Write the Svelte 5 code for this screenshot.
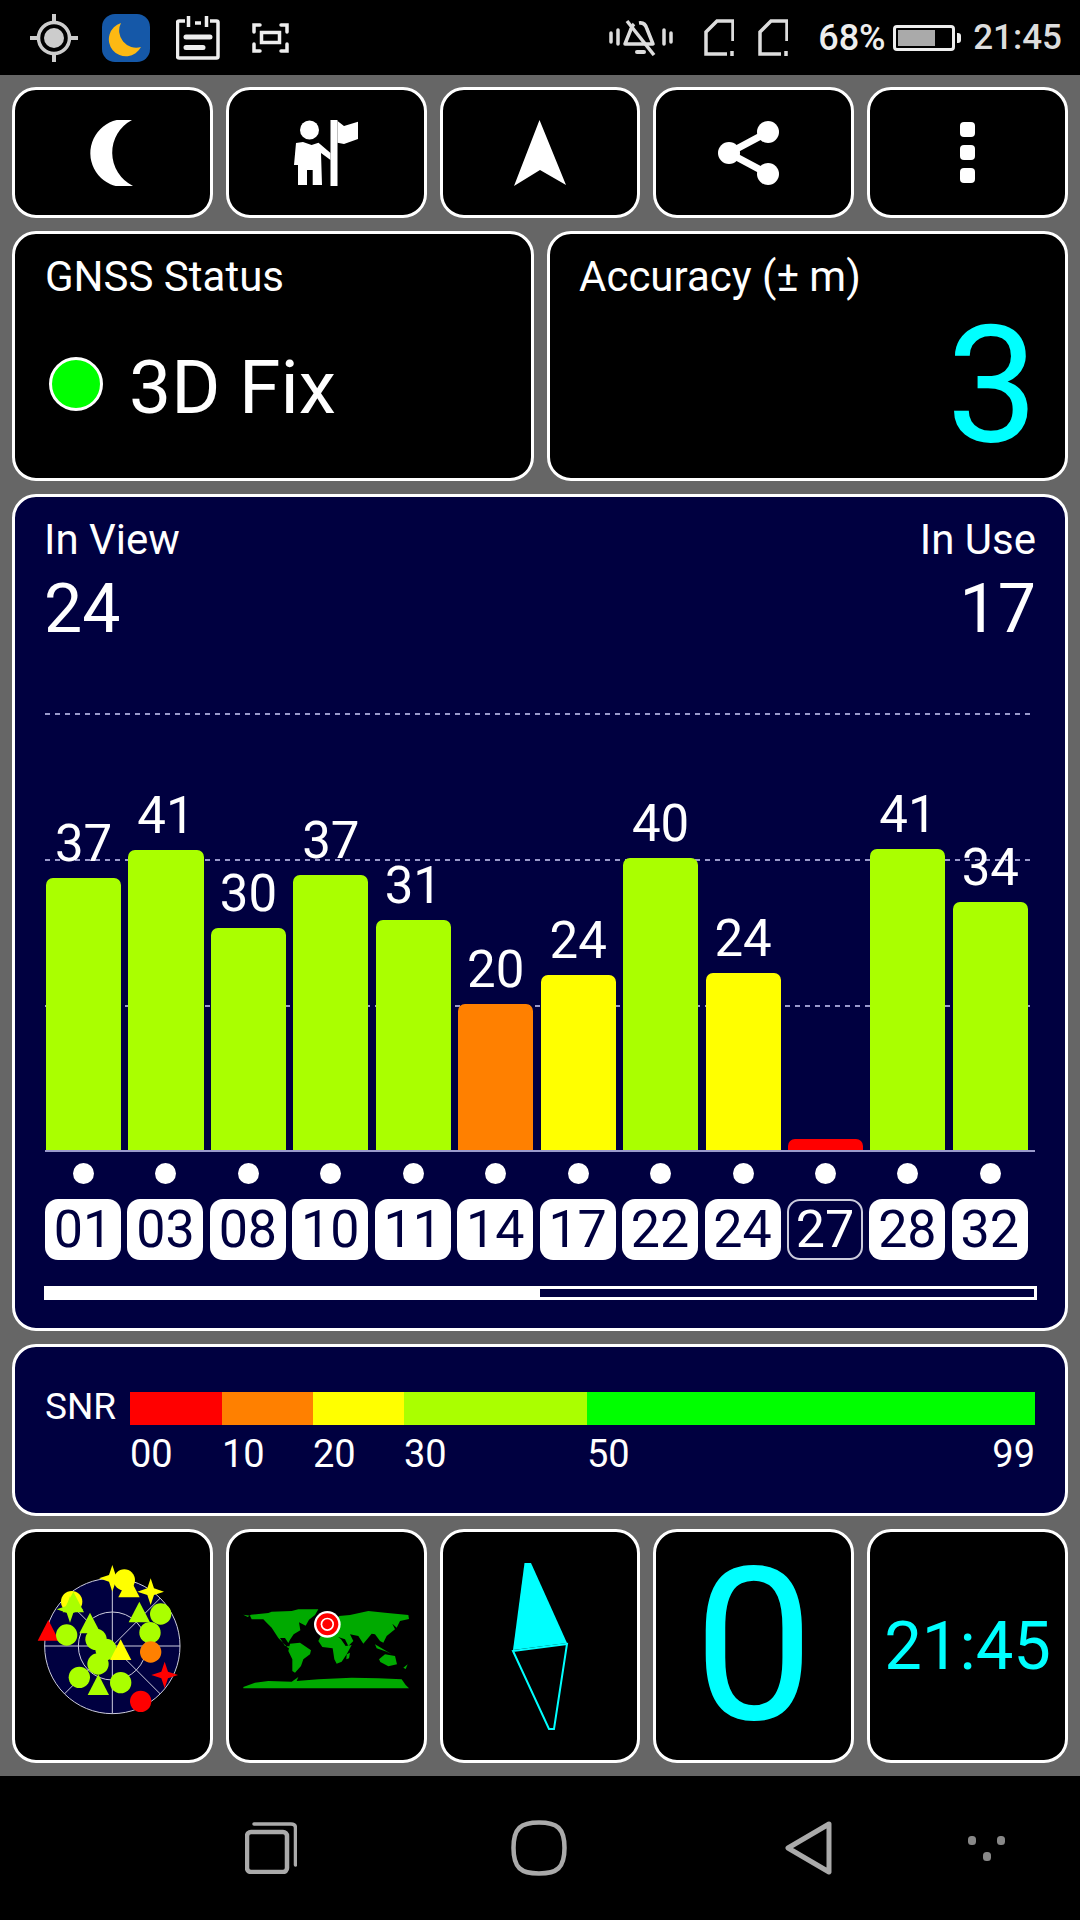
<script lang="ts">
  const LIME = "#aaff00";
  const YELLOW = "#ffff00";
  const ORANGE = "#ff8000";
  const RED = "#ff0000";

  const sats = [
    { id: "01", snr: 37, h: 272, color: LIME },
    { id: "03", snr: 41, h: 300, color: LIME },
    { id: "08", snr: 30, h: 222, color: LIME },
    { id: "10", snr: 37, h: 275, color: LIME },
    { id: "11", snr: 31, h: 230, color: LIME },
    { id: "14", snr: 20, h: 146, color: ORANGE },
    { id: "17", snr: 24, h: 175, color: YELLOW },
    { id: "22", snr: 40, h: 292, color: LIME },
    { id: "24", snr: 24, h: 177, color: YELLOW },
    { id: "27", snr: null, h: 11, color: RED, off: true },
    { id: "28", snr: 41, h: 301, color: LIME },
    { id: "32", snr: 34, h: 248, color: LIME }
  ];

  const scale = [
    { label: "00", w: 92, color: RED },
    { label: "10", w: 91, color: ORANGE },
    { label: "20", w: 91, color: YELLOW },
    { label: "30", w: 183, color: LIME },
    { label: "50", w: 448, color: "#00ff00", end: "99" }
  ];

  // radar marks, in 510 unit space
  const circles = [
    [283, 60, YELLOW], [125, 125, YELLOW], [392, 162, LIME], [360, 218, LIME],
    [362, 276, ORANGE], [110, 225, LIME], [198, 238, LIME], [228, 268, LIME],
    [204, 312, LIME], [148, 352, LIME], [272, 368, LIME], [332, 424, RED]
  ];
  const triangles = [
    [297, 50, YELLOW], [328, 125, LIME], [55, 180, RED], [180, 158, LIME]
  ];
  const stars = [
    [247, 55, YELLOW], [362, 95, YELLOW], [404, 345, RED]
  ];

  function tri(x: number, y: number) {
    return `${x},${y} ${x + 32},${y + 62} ${x - 32},${y + 62}`;
  }
  function star(x: number, y: number) {
    const r = 40;
    const k = 10;
    return `${x},${y - r} ${x + k},${y - k} ${x + r},${y} ${x + k},${y + k} ${x},${y + r} ${x - k},${y + k} ${x - r},${y} ${x - k},${y - k}`;
  }
</script>

<div class="screen">
  <header class="status">
    <div class="status-left">
      <svg class="ic" width="48" height="48" viewBox="0 0 48 48">
        <circle cx="24" cy="24" r="15.500" fill="none" stroke="#ccc" stroke-width="3.500" />
        <circle cx="24" cy="24" r="10" fill="#ccc" />
        <path d="M24 0v8M24 40v8M0 24h8M40 24h8" stroke="#ccc" stroke-width="4" />
      </svg>
      <svg class="ic app" width="48" height="48" viewBox="0 0 48 48">
        <rect width="48" height="48" rx="13" fill="#1558a8" />
        <path d="M19 9A17 17 0 1 0 39 33A17 17 0 0 1 19 9Z" fill="#fdb913" />
      </svg>
      <svg class="ic notes" width="44" height="44" viewBox="0 0 44 44" fill="none" stroke="#eee" stroke-width="3.500">
        <path d="M9 5H3a1.500 1.500 0 0 0-1.500 1.500V40.500A1.500 1.500 0 0 0 3 42H40.500A1.500 1.500 0 0 0 42 40.500V6.500A1.500 1.500 0 0 0 40.500 5H34" />
        <path d="M12.500 0v11M30.500 0v11M19 7h6" />
        <path d="M10 21h24M10 31.500h17" stroke-width="5" stroke-linecap="round" />
      </svg>
      <svg class="ic shot" width="37" height="30" viewBox="0 0 37 30" fill="none" stroke="#eee" stroke-width="3.500">
        <path d="M8 2H2v7M29 2h6v7M2 21v7h6M35 21v7h-6" stroke-linecap="round" />
        <rect x="9.500" y="9.500" width="18" height="10" />
      </svg>
    </div>
    <div class="status-right">
      <svg class="ic" width="64" height="37" viewBox="0 0 64 37" fill="none" stroke="#ddd">
        <path d="M30 4 Q36 3 38 10L44 25H16L22 10Q23 7 25 5" stroke-width="3.500" stroke-linejoin="round" />
        <path d="M18 2L45 36" stroke-width="3.500" />
        <path d="M28 33h7" stroke-width="4" stroke-linecap="round" />
        <path d="M2 14v9M9 11v14M55 11v14M62 14v9" stroke-width="3.500" stroke-linecap="round" />
      </svg>
      <svg class="ic sim1" width="30" height="37" viewBox="0 0 30 37" fill="none" stroke="#ddd" stroke-width="3.500">
        <path d="M29 22V2H13L2 13V35H23" />
        <path d="M28 32v5" />
      </svg>
      <svg class="ic sim2" width="30" height="37" viewBox="0 0 30 37" fill="none" stroke="#ddd" stroke-width="3.500">
        <path d="M29 22V2H13L2 13V35H23" />
        <path d="M28 32v5" />
      </svg>
      <span class="pct">68%</span>
      <div class="battery"><div class="battery-fill"></div></div>
      <div class="battery-tip"></div>
      <span class="clock">21:45</span>
    </div>
  </header>

  <main class="main">
    <div class="row5 top">
      <div class="btn">
        <svg width="44" height="66" viewBox="0 0 44 66"><path d="M42 0A34 34 0 1 0 43 66A37 37 0 0 1 42 0Z" fill="#fff" /></svg>
      </div>
      <div class="btn">
        <svg width="64" height="66" viewBox="0 0 64 66" fill="#fff">
          <circle cx="15.500" cy="10" r="9.500" />
          <rect x="36.500" y="0" width="7" height="66" />
          <path d="M43.500 1L50 6L64 1.700V19L50 24L43.500 22.700Z" />
          <path d="M2 23L9 22L17.600 25L24.500 22.700L36.500 33V40L27 33L28 65H18.700V50H13V65H4V45H0Z" />
        </svg>
      </div>
      <div class="btn">
        <svg width="54" height="66" viewBox="0 0 54 66"><path d="M26.500 0L53 65L27 50L1 66Z" fill="#fff" /></svg>
      </div>
      <div class="btn">
        <svg class="share" width="62" height="64" viewBox="0 0 62 64" fill="#fff">
          <circle cx="50" cy="11" r="11" /><circle cx="11" cy="32" r="11" /><circle cx="50" cy="53" r="11" />
          <path d="M50 11L11 32L50 53" fill="none" stroke="#fff" stroke-width="7" />
        </svg>
      </div>
      <div class="btn">
        <div class="dots"><i></i><i></i><i></i></div>
      </div>
    </div>

    <div class="row2">
      <section class="card">
        <div class="label">GNSS Status</div>
        <div class="fix">
          <span class="fix-dot"></span>
          <span class="fix-text">3D Fix</span>
        </div>
      </section>
      <section class="card accuracy">
        <div class="label">Accuracy (± m)</div>
        <div class="accuracy-value">3</div>
      </section>
    </div>

    <section class="sky">
      <div class="counts">
        <div>
          <div class="label">In View</div>
          <div class="count">24</div>
        </div>
        <div class="right">
          <div class="label">In Use</div>
          <div class="count">17</div>
        </div>
      </div>

      <div class="chart">
        <div class="dash d1"></div>
        <div class="dash d2"></div>
        <div class="dash d3"></div>
        <div class="cols bars">
          {#each sats as s}
            <div class="col">
              {#if s.snr !== null}<div class="snr">{s.snr}</div>{/if}
              <div class="bar" style="height: {s.h}px; background: {s.color}"></div>
            </div>
          {/each}
        </div>
      </div>

      <div class="cols dots-row">
        {#each sats as s}
          <span class="sat-dot"></span>
        {/each}
      </div>

      <div class="cols chips">
        {#each sats as s}
          <div class="chip" class:off={s.off}>{s.id}</div>
        {/each}
      </div>

      <div class="progress"><div class="progress-fill"></div></div>
    </section>

    <section class="snr-panel">
      <div class="snr-label">SNR</div>
      <div class="scale">
        {#each scale as seg}
          <div class="seg" style="width: {seg.w}px">
            <div class="seg-bar" style="background: {seg.color}"></div>
            <div class="seg-ticks">
              <span>{seg.label}</span>
              {#if seg.end}<span>{seg.end}</span>{/if}
            </div>
          </div>
        {/each}
      </div>
    </section>

    <div class="row5 bottom">
      <div class="btn">
        <svg class="radar" width="170" height="170" viewBox="0 0 510 510">
          <circle cx="247" cy="258" r="203" fill="#000040" stroke="#ccd" stroke-width="3" />
          <circle cx="247" cy="258" r="102" fill="none" stroke="#ccd" stroke-width="3" />
          <path d="M44 258H450M247 55V461M103 114L391 402M103 402L391 114" stroke="#ccd" stroke-width="3" />
          {#each triangles as t}
            <polygon points={tri(t[0] as number, t[1] as number)} fill={t[2] as string} />
          {/each}
          {#each stars as t}
            <polygon points={star(t[0] as number, t[1] as number)} fill={t[2] as string} />
          {/each}
          {#each circles as c}
            <circle cx={c[0]} cy={c[1]} r="32" fill={c[2] as string} />
          {/each}
          <polygon points={tri(272, 238)} fill={YELLOW} />
          <polygon points={star(120, 148)} fill={LIME} />
          <polygon points={tri(130, 95)} fill={LIME} />
          <polygon points={tri(205, 343)} fill={LIME} />
        </svg>
      </div>
      <div class="btn">
        <svg class="map" width="180" height="110" viewBox="0 0 540 330" fill="#00aa00">
          <path d="M25 71L38 78L48 71L100 66L110 62L170 60L190 55H250L240 72L222 86L212 104L192 94L196 118L176 130L165 146L160 156L150 141L135 141L150 165L166 166L160 172L130 141L110 110L95 95L85 85L50 85L45 74Z" />
          <path d="M165 158L195 155L228 178L225 190L205 205L198 225L180 245L172 240L172 205L160 180Z" />
          <path d="M265 125L300 100L312 75L345 72L400 60L450 65L520 72L522 84L495 90L485 110L472 98L480 115L455 135L445 155L435 150L420 130L410 128L385 158L370 135L345 130L355 150L340 165L330 145L300 135Z" />
          <path d="M250 150L262 125L300 130L318 145L332 165L350 162L335 190L320 212L305 218L298 205L293 172L262 168Z" />
          <path d="M335 190L345 185L342 202L334 205Z" />
          <path d="M432 205L450 190L480 195L486 220L460 226L436 213Z" />
          <path d="M420 160L440 172L470 190L455 182L425 172ZM505 230L518 220L512 234Z" />
          <path d="M25 292V288L60 275L100 270L170 272L190 258L185 270L250 265L350 260L430 262L500 265L512 282L522 292Z" />
          <circle cx="277" cy="100" r="40" fill="#fff" />
          <circle cx="277" cy="100" r="33" fill="#f00" />
          <circle cx="277" cy="100" r="20" fill="#fff" />
          <circle cx="277" cy="100" r="15" fill="#f00" />
        </svg>
      </div>
      <div class="btn">
        <svg width="200" height="234" viewBox="0 0 200 234">
          <path d="M84.500 34H91L127 114L73 121Z" fill="#0ff" />
          <path d="M73 122L109 200H114L127 115Z" fill="none" stroke="#0ff" stroke-width="2" />
        </svg>
      </div>
      <div class="btn big-zero">0</div>
      <div class="btn time">21:45</div>
    </div>
  </main>

  <nav class="nav">
    <svg width="52" height="52" viewBox="0 0 52 52" fill="none" stroke="#aaa">
      <rect x="2" y="10" width="40" height="40" rx="4" stroke-width="4.500" />
      <path d="M9 2H46Q50.500 2 50.500 6V43" stroke-width="3.500" stroke-linecap="round" />
    </svg>
    <svg class="home" width="56" height="56" viewBox="0 0 56 56" fill="none" stroke="#aaa" stroke-width="4.500">
      <path d="M28 2.500C46 2.500 53.500 8 53.500 28C53.500 48 46 53.500 28 53.500C10 53.500 2.500 48 2.500 28C2.500 8 10 2.500 28 2.500Z" />
    </svg>
    <svg class="back" width="47" height="54" viewBox="0 0 47 54" fill="none" stroke="#aaa" stroke-width="5" stroke-linejoin="round">
      <path d="M44 3L3 27L44 51Z" />
    </svg>
    <svg class="more" width="37" height="25" viewBox="0 0 37 25" fill="#888">
      <rect x="0" y="0" width="8" height="9" rx="3.500" />
      <rect x="29" y="0" width="8" height="9" rx="3.500" />
      <rect x="15" y="16" width="8" height="9" rx="3.500" />
    </svg>
  </nav>
</div>

<style>
  :global(body) {
    margin: 0;
    background: #000;
  }

  .screen {
    width: 1080px;
    height: 1920px;
    display: flex;
    flex-direction: column;
    font-family: Roboto, "Liberation Sans", sans-serif;
    color: #fff;
    overflow: hidden;
  }

  .status {
    height: 75px;
    background: #000;
    display: flex;
    justify-content: space-between;
    align-items: center;
    padding: 0 18px 0 30px;
    box-sizing: border-box;
  }

  .status-left,
  .status-right {
    display: flex;
    align-items: center;
  }

  .ic {
    display: block;
    flex: none;
  }

  .app {
    margin-left: 24px;
  }

  .notes {
    margin-left: 26px;
  }

  .shot {
    margin-left: 32px;
    margin-top: 1px;
  }

  .sim1 {
    margin-left: 31px;
  }

  .sim2 {
    margin-left: 24px;
  }

  .pct {
    margin-left: 30px;
    font-size: 36px;
    font-weight: 500;
    color: #eee;
    width: 75px;
  }

  .battery {
    width: 62px;
    height: 26px;
    box-sizing: border-box;
    border: 3px solid #eee;
    border-radius: 4px;
    padding: 2px;
  }

  .battery-fill {
    width: 37px;
    height: 100%;
    background: #aaa;
  }

  .battery-tip {
    width: 4px;
    height: 10px;
    margin-left: 2px;
    background: #eee;
    border-radius: 0 3px 3px 0;
  }

  .clock {
    margin-left: 12px;
    font-size: 35px;
    font-weight: 500;
    color: #ddd;
  }

  .main {
    height: 1701px;
    box-sizing: border-box;
    background: #666;
    padding: 12px 12px 13px;
    display: flex;
    flex-direction: column;
    gap: 13px;
  }

  .row5 {
    display: grid;
    grid-template-columns: repeat(5, minmax(0, 1fr));
    grid-template-rows: minmax(0, 1fr);
    gap: 13px;
  }

  .top {
    height: 131px;
  }

  .bottom {
    height: 234px;
  }

  .btn {
    min-width: 0;
    min-height: 0;
    background: #000;
    border: 3px solid #fff;
    border-radius: 24px;
    box-sizing: border-box;
    display: flex;
    align-items: center;
    justify-content: center;
  }

  .btn svg {
    flex: none;
    display: block;
  }

  .share {
    margin-left: -10px;
  }

  .radar {
    margin: -2px 0 0 5px;
  }

  .map {
    margin-left: -3px;
  }

  .dots {
    display: flex;
    flex-direction: column;
    gap: 8px;
  }

  .dots i {
    display: block;
    width: 15px;
    height: 15px;
    background: #fff;
    border-radius: 4px;
  }

  .row2 {
    display: grid;
    grid-template-columns: 522px 521px;
    gap: 13px;
  }

  .card {
    height: 250px;
    box-sizing: border-box;
    background: #000;
    border: 3px solid #fff;
    border-radius: 24px;
    padding: 19px 27px 0 30px;
  }

  .accuracy {
    padding-left: 29px;
  }

  .label {
    font-size: 42px;
    line-height: 48px;
  }

  .fix {
    display: flex;
    align-items: flex-start;
    margin-top: 49px;
  }

  .fix-dot {
    width: 54px;
    height: 54px;
    box-sizing: border-box;
    margin: 7px 0 0 4px;
    border-radius: 50%;
    border: 3px solid #fff;
    background: #00ff00;
  }

  .fix-text {
    margin-left: 26px;
    font-size: 75px;
    line-height: 74px;
  }

  .accuracy-value {
    margin-top: 3px;
    font-size: 163px;
    line-height: 163px;
    text-align: right;
    color: #00ffff;
  }

  .sky {
    background: #000040;
    border: 3px solid #fff;
    border-radius: 24px;
    box-sizing: border-box;
    padding: 19px 29px 28px 30px;
  }

  .counts {
    display: flex;
    justify-content: space-between;
    margin-left: -1px;
  }

  .right {
    text-align: right;
  }

  .count {
    margin-top: 11px;
    font-size: 68px;
    line-height: 68px;
  }

  .chart {
    position: relative;
    margin-top: 70px;
    height: 439px;
    box-sizing: border-box;
    border-bottom: 2px solid #9a9acc;
    padding: 0 4px 0 1px;
    margin-right: 1px;
  }

  .dash {
    position: absolute;
    left: 0;
    right: 3px;
    height: 2px;
    background: repeating-linear-gradient(to right, #9a9acc 0 5px, transparent 5px 10px);
  }

  .d1 {
    top: 0;
  }

  .d2 {
    top: 146px;
  }

  .d3 {
    top: 292px;
  }

  .cols {
    display: grid;
    grid-template-columns: repeat(12, 75.100px);
    column-gap: 7.350px;
    position: relative;
  }

  .bars {
    height: 100%;
  }

  .col {
    display: flex;
    flex-direction: column;
    justify-content: flex-end;
    align-items: center;
  }

  .snr {
    font-size: 51px;
    line-height: 40px;
    margin-bottom: 14px;
  }

  .bar {
    width: 100%;
    border-radius: 7px 7px 0 0;
  }

  .dots-row {
    margin: 11px 0 0 1px;
    justify-items: center;
  }

  .sat-dot {
    width: 21px;
    height: 21px;
    border-radius: 50%;
    background: #fff;
  }

  .chips {
    margin: 15px 0 0 0;
  }

  .chip {
    height: 61px;
    width: 76px;
    box-sizing: border-box;
    background: #fff;
    color: #000040;
    border-radius: 13px;
    font-size: 52px;
    line-height: 61px;
    text-align: center;
  }

  .chip.off {
    background: #000040;
    color: #fff;
    border: 2px solid #ccd;
    line-height: 57px;
  }

  .progress {
    margin-top: 26px;
    margin-left: -1px;
    margin-right: -1px;
    height: 14px;
    box-sizing: border-box;
    border: 3px solid #fff;
  }

  .progress-fill {
    width: 493px;
    height: 100%;
    background: #fff;
  }

  .snr-panel {
    background: #000040;
    border: 3px solid #fff;
    border-radius: 24px;
    box-sizing: border-box;
    height: 172px;
    padding: 45px 29px 0 30px;
    display: flex;
  }

  .snr-label {
    width: 85px;
    font-size: 37px;
    line-height: 33px;
    margin-top: -2px;
  }

  .scale {
    display: flex;
  }

  .seg-bar {
    height: 33px;
  }

  .seg-ticks {
    display: flex;
    justify-content: space-between;
    margin-top: 7px;
    font-size: 38px;
    line-height: 44px;
  }

  .big-zero {
    font-size: 214px;
    line-height: 1;
    color: #00ffff;
  }

  .time {
    font-size: 67px;
    color: #00ffff;
  }

  .nav {
    height: 144px;
    background: #000;
    display: flex;
    align-items: center;
    padding-left: 245px;
  }

  .nav svg {
    flex: none;
    display: block;
  }

  .home {
    margin-left: 214px;
  }

  .back {
    margin-left: 218px;
  }

  .more {
    margin-left: 136px;
  }
</style>
